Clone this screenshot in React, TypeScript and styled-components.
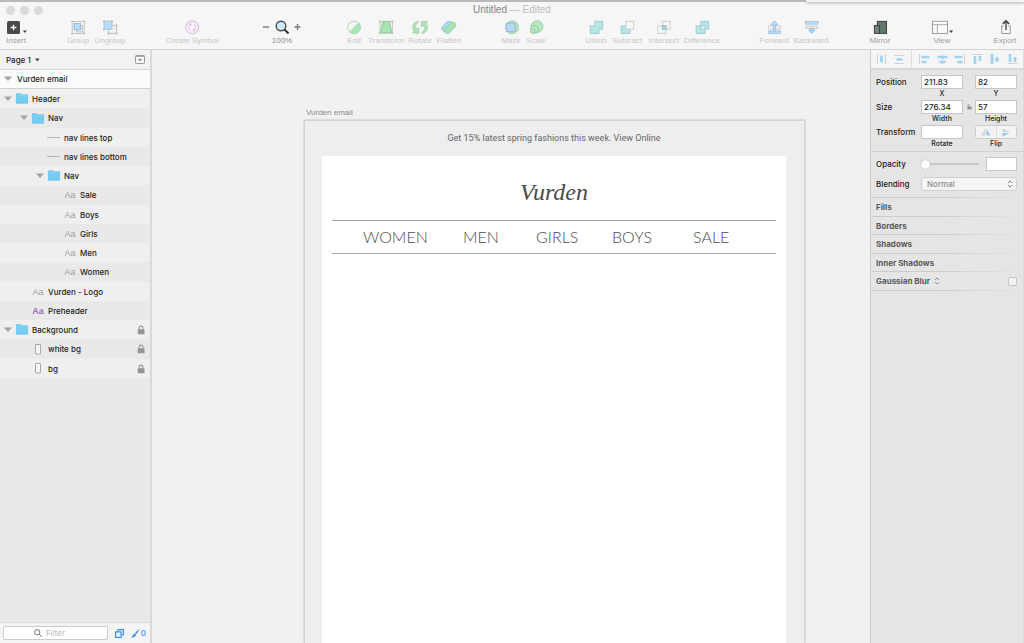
import React from "react";
import styled, { createGlobalStyle, css } from "styled-components";

const GlobalStyle = createGlobalStyle`
  *, *::before, *::after { box-sizing: border-box; }
  html, body, #root { height: 100%; }
  body {
    margin: 0;
    overflow: hidden;
    background: #f1f1f1;
    font-family: "Liberation Sans", Arial, sans-serif;
    color: #1c1c1c;
  }
  button, input, select { font: inherit; color: inherit; margin: 0; padding: 0; }
  button { border: 0; background: none; }
  ul { list-style: none; margin: 0; padding: 0; }
  h1, h2, p { margin: 0; font-weight: 400; }
`;

/* ---------- window ---------- */

const Window = styled.div`
  position: relative;
  display: flex;
  flex-direction: column;
  height: 100vh;
`;

const Header = styled.header`
  border-top: 2px solid #bababa;
  border-bottom: 1px solid #d4d4d4;
  background: #f6f6f6;
`;

const BackgroundPanel = styled.div`
  position: absolute;
  top: 0;
  right: 0;
  width: 218px;
  height: 2px;
  background: #f4f4f4;
  box-shadow: 0 1px 3px rgba(0, 0, 0, 0.35);
  clip-path: inset(0 0 -4px -4px);
`;

const TitleBar = styled.div`
  display: grid;
  grid-template-columns: 1fr auto 1fr;
  align-items: center;
  height: 16px;
  padding: 0 6px;
`;

const Lights = styled.div`
  display: flex;
  gap: 5px;
`;

const Light = styled.button`
  width: 9px;
  height: 9px;
  border-radius: 50%;
  background: #dadada;
`;

const Title = styled.h1`
  font-size: 10px;
  line-height: 12px;
  color: #858585;
  span { color: #bebebe; }
`;

const Toolbar = styled.div`
  display: flex;
  height: 31px;
  padding: 1px 6px 0 4px;
`;

const Spacer = styled.div<{ $grow: number }>`
  flex: ${(p) => p.$grow} 1 0;
`;

const Tool = styled.button<{ $w: number; $on?: boolean }>`
  display: flex;
  flex-direction: column;
  align-items: center;
  gap: 1px;
  flex: none;
  width: ${(p) => p.$w}px;
  font-size: 8px;
  line-height: 10px;
  white-space: nowrap;
  color: ${(p) => (p.$on ? "#9e9e9e" : "#c8c8c8")};
`;

const ZoomGroup = styled.div`
  display: grid;
  grid-template-columns: 10px 16px 10px;
  justify-content: space-between;
  align-items: center;
  row-gap: 1px;
  width: 40px;
  height: 27px;
  font-size: 8px;
  line-height: 10px;
  color: #8e8e8e;
  text-align: center;
  output { grid-column: 1 / -1; }
  button { height: 16px; display: flex; align-items: center; justify-content: center; }
`;

const Icon = styled.svg<{ $w?: number; $h?: number }>`
  display: block;
  flex: none;
  width: ${(p) => p.$w ?? 16}px;
  height: ${(p) => p.$h ?? 16}px;
  overflow: visible;
`;

const Body = styled.div`
  display: flex;
  flex: 1;
  min-height: 0;
`;

/* ---------- layer list ---------- */

const uiText = css`
  font-family: Inter, "Liberation Sans", sans-serif;
  font-size: 8px;
  line-height: 10px;
  font-weight: 500;
`;

const Sidebar = styled.aside`
  ${uiText}
  display: flex;
  flex-direction: column;
  flex: none;
  width: 152px;
  background: #e9e9e9;
  border-right: 2px solid #d9d9d9;
`;

const PageBar = styled.div`
  display: flex;
  align-items: center;
  justify-content: space-between;
  height: 20px;
  padding: 0 5px 0 6px;
  border-bottom: 1px solid #d6d6d6;
  background: #f2f2f2;
`;

const PageButton = styled.button`
  display: flex;
  align-items: center;
  gap: 4px;
`;

const ArtboardRow = styled.button`
  display: flex;
  align-items: center;
  gap: 5px;
  height: 19px;
  padding-left: 4px;
  border-bottom: 1px solid #d2d2d2;
  background: #fbfbfb;
`;

const LayerList = styled.ul`
  flex: 1;
`;

const LayerRow = styled.li<{ $level: number }>`
  display: flex;
  align-items: center;
  gap: 4px;
  height: 19px;
  padding: 0 5px 0 ${(p) => 4 + p.$level * 16}px;
  background: #e9e9e9;
  &:nth-child(odd) { background: #efefef; }
  &:nth-child(4n + 2) { height: 20px; }
`;

const Arrow = styled.span`
  flex: none;
  width: 8px;
`;

const Glyph = styled.span`
  display: flex;
  justify-content: center;
  flex: none;
  width: 12px;
`;

const TypeMark = styled.span<{ $accent?: boolean }>`
  font-family: "Liberation Sans", Arial, sans-serif;
  font-size: 9px;
  font-weight: ${(p) => (p.$accent ? 700 : 400)};
  color: ${(p) => (p.$accent ? "#a070b6" : "#a0a0a0")};
`;

const LayerName = styled.span`
  flex: 1;
  white-space: nowrap;
`;

const FilterBar = styled.div`
  display: flex;
  align-items: center;
  height: 21px;
  padding: 0 4px 0 3px;
  border-top: 1px solid #dcdcdc;
  background: #f4f4f4;
  color: #3d8ff0;
`;

const FilterField = styled.label`
  display: flex;
  align-items: center;
  gap: 4px;
  flex: 1;
  height: 14px;
  margin-right: 7px;
  padding-left: 30px;
  border: 1px solid #cdcdcd;
  border-radius: 2px;
  background: #fff;
  input {
    width: 50px;
    border: 0;
    outline: 0;
    background: none;
    color: #333;
    font-weight: 400;
  }
  input::placeholder { color: #b8b8b8; opacity: 1; }
`;

const FooterButton = styled.button`
  display: flex;
  align-items: center;
  gap: 1px;
  & + & { margin-left: 7px; }
`;

/* ---------- canvas ---------- */

const Canvas = styled.main`
  display: flex;
  flex-direction: column;
  align-items: flex-start;
  flex: 1;
  min-width: 0;
  overflow: hidden;
  padding: 57px 0 0 152px;
  background: #f1f1f1;
`;

const ArtboardName = styled.p`
  padding: 0 2px 1px;
  font-size: 8px;
  line-height: 12px;
  color: #8a8a8a;
`;

const Artboard = styled.section`
  display: flex;
  flex-direction: column;
  flex: 1;
  width: 501px;
  padding: 0 18px 0 17px;
  border: 1px solid #d2d2d2;
  border-bottom: 0;
  background: #eeeeee;
  box-shadow: 0 0 2px rgba(0, 0, 0, 0.25);
`;

const Preheader = styled.p`
  height: 35px;
  font-family: Roboto, "Liberation Sans", sans-serif;
  font-size: 9px;
  line-height: 35px;
  text-align: center;
  color: #666;
  a { color: inherit; text-decoration: none; }
`;

const Sheet = styled.div`
  flex: 1;
  padding: 0 10px;
  background: #fff;
`;

const Logo = styled.h2`
  height: 64px;
  padding-top: 16px;
  font-family: "Liberation Serif", "Times New Roman", serif;
  font-style: italic;
  font-size: 24px;
  line-height: 40px;
  text-align: center;
  color: #4a4a4a;
`;

const MailNav = styled.nav`
  display: grid;
  grid-template-columns: 100px 73px 76px 81px auto;
  height: 34px;
  padding-left: 31px;
  border-top: 1px solid #a6a6a6;
  border-bottom: 1px solid #a6a6a6;
  font-family: Lato, sans-serif;
  font-weight: 300;
  font-size: 16px;
  line-height: 32px;
  a { color: #4c4c4c; text-decoration: none; }
`;

/* ---------- inspector ---------- */

const Inspector = styled.aside`
  ${uiText}
  flex: none;
  width: 154px;
  background: #e5e5e5;
  border-left: 1px solid #cbcbcb;
  border-right: 1px solid #dadada;
`;

const AlignBar = styled.div`
  display: flex;
  align-items: center;
  justify-content: space-between;
  height: 20px;
  padding: 0 5px;
  border-bottom: 2px solid #d8d8d8;
  background: #f5f5f5;
  hr { width: 1px; height: 18px; margin: 0; border: 0; background: #dcdcdc; }
`;

const Geometry = styled.div`
  padding: 5px 6px 1px 5px;
  border-bottom: 1px solid #d0d0d0;
`;

const GeometryRow = styled.div`
  display: grid;
  grid-template-columns: 45px 42px 12px 42px;
  height: 25px;
  line-height: 14px;
`;

const FieldBox = styled.label`
  display: flex;
  flex-direction: column;
  align-items: center;
  gap: 1px;
  font-size: 7px;
  line-height: 8px;
`;

const TextField = styled.input`
  width: 100%;
  height: 14px;
  padding: 0 2px;
  border: 1px solid #c6c6c6;
  border-radius: 0;
  background: #fff;
  font-size: 8px;
`;

const LockButton = styled.button`
  display: flex;
  align-items: center;
  justify-content: center;
  height: 14px;
`;

const FlipBox = styled.div`
  font-size: 7px;
  line-height: 10px;
  text-align: center;
`;

const FlipButtons = styled.div`
  display: flex;
  height: 14px;
  border: 1px solid #cccccc;
  border-radius: 3px;
  background: #f3f3f3;
  button { flex: 1; display: flex; align-items: center; justify-content: center; }
  button + button { border-left: 1px solid #e0e0e0; }
`;

const Blend = styled.div`
  padding: 5px 6px 6px 5px;
`;

const BlendRow = styled.div`
  display: flex;
  align-items: center;
  height: 14px;
  & + & { margin-top: 6px; }
  label { flex: none; width: 45px; }
`;

const Slider = styled.input`
  appearance: none;
  width: 58px;
  height: 10px;
  margin-right: 7px;
  background: linear-gradient(#c9c9c9, #c9c9c9) center / 100% 2px no-repeat;
  &::-webkit-slider-thumb {
    appearance: none;
    width: 9px;
    height: 9px;
    border-radius: 50%;
    background: #fcfcfc;
    box-shadow: 0 0 1px rgba(0, 0, 0, 0.4);
  }
`;

const OpacityField = styled(TextField)`
  width: 31px;
`;

const SelectBox = styled.div`
  display: flex;
  align-items: center;
  flex: 1;
  height: 14px;
  padding-right: 3px;
  border: 1px solid #cfcfcf;
  border-radius: 3px;
  background: #f4f4f4;
  select {
    appearance: none;
    flex: 1;
    padding-left: 5px;
    border: 0;
    background: none;
    color: #8c8c8c;
    line-height: 12px;
  }
`;

const Section = styled.section`
  display: flex;
  align-items: center;
  gap: 4px;
  height: 19px;
  padding: 0 6px 0 5px;
  border-top: 1px solid;
  border-image: linear-gradient(to right, #cbcbcb 40%, #e5e5e5) 1;
  &:nth-of-type(even) { height: 18px; }
  &:last-of-type { height: 20px; border-bottom: 1px solid; }
  button { font-weight: 700; color: #5a5a5a; }
  input {
    appearance: none;
    width: 9px;
    height: 9px;
    margin-left: auto;
    border: 1px solid #c4c4c4;
    border-radius: 2px;
    background: #f4f4f4;
  }
`;

/* ---------- drawings ---------- */

const DownArrow = () => (
  <Icon $w={8} $h={6} viewBox="0 0 8 6"><path d="M0 .5h8L4 5z" fill="#a3a3a3" /></Icon>
);

const SmallCaret = () => (
  <Icon $w={5} $h={4} viewBox="0 0 5 4"><path d="M0 .5h4.6L2.3 3.4z" fill="#444" /></Icon>
);

const Stepper = () => (
  <Icon $w={6} $h={8} viewBox="0 0 6 8" fill="none" stroke="#8b8b8b">
    <path d="M1 3l2-2 2 2M1 5l2 2 2-2" />
  </Icon>
);

const Folder = () => (
  <Icon $w={12} $h={11} viewBox="0 0 12 11">
    <path d="M.4 .8h4.2l1 1h6v8.4H.4z" fill="#74cdf4" stroke="#62bbe4" strokeWidth=".7" />
    <path d="M.8 2.8h10.4" stroke="#9adcf8" strokeWidth=".6" />
  </Icon>
);

const Lock = () => (
  <Icon $w={8} $h={10} viewBox="0 0 8 10">
    <rect x=".7" y="4.3" width="6.8" height="5" rx=".5" fill="#949494" />
    <path d="M2.2 4.5V3a1.9 1.9 0 0 1 3.8 0v1.5" fill="none" stroke="#949494" strokeWidth="1.1" />
  </Icon>
);

const gray = "#c3c3c3";
const teal = "#b4e6e6";
const tealEdge = "#a0cccc";

const drawings: Record<string, React.ReactNode> = {
  insert: (
    <>
      <rect x="-1" y="2" width="13" height="13" rx="1.6" fill="#4b4b4b" />
      <path d="M5.5 5.7v5.6M2.7 8.5h5.6" stroke="#fff" strokeWidth="1.3" />
      <path d="M14.800 11.400h4.200l-2.100 2.600z" fill="#444" />
    </>
  ),
  group: (
    <>
      <rect x="2.2" y="2.5" width="12" height="12" fill="none" stroke={gray} />
      <rect x="6.5" y="6.5" width="6" height="6.4" fill="#f1f1f1" stroke={gray} />
      <rect x="4.2" y="4.6" width="6.4" height="6.2" fill="#b9dff8" stroke="#8fbbe0" />
      <path d="M1.3 1.6h2v2h-2zM13.2 1.6h2v2h-2zM1.3 13.4h2v2h-2zM13.2 13.4h2v2h-2z" fill={gray} />
    </>
  ),
  ungroup: (
    <>
      <rect x="6.4" y="6.4" width="8" height="8" fill="#f4f4f4" stroke={gray} />
      <rect x="2" y="2.2" width="8" height="8" fill="#b9dff8" stroke="#9cc5e6" />
      <path d="M1 1.3h2v2H1zM9 1.3h2v2H9zM1 9.2h2v2H1zM13.4 5.4h2v2h-2zM13.4 13.4h2v2h-2zM5.4 13.4h2v2h-2z" fill={gray} />
    </>
  ),
  symbol: (
    <g fill="none" stroke="#dfc0e8" strokeWidth="1.1">
      <circle cx="8.2" cy="8.3" r="6.4" />
      <path d="M6.6 11.6C3.9 10.3 3.9 6.4 6.6 5.1M5 4.9h2v2M9.8 5c2.7 1.3 2.7 5.2 0 6.5M11.4 11.7h-2v-2" />
    </g>
  ),
  edit: (
    <>
      <circle cx="8" cy="8.3" r="6.2" fill="#f3f6f3" stroke="#bfcfc2" />
      <path d="M12.6 3.9A6.3 6.3 0 0 1 3.7 12.9z" fill="#a9e5b2" stroke="#9ed3a7" strokeWidth=".7" />
    </>
  ),
  transform: (
    <>
      <rect x="1.9" y="2.3" width="12.6" height="11.8" fill="#e6f3e8" stroke="#c0cfc2" />
      <path d="M5 2.8h6.4l2.5 11H2.5z" fill="#a9e5b2" stroke="#93c79b" />
      <path d="M1 1.4h2v2H1zM13.3 1.4h2v2h-2zM1 13h2v2H1zM13.3 13h2v2h-2z" fill="#b4ccb7" />
    </>
  ),
  rotate: (
    <g fill="#a9e5b2" stroke="#a3cfa9" strokeWidth=".8">
      <path d="M6.200 2.200C1 2.600-1 8.400 2.100 12L.6 13.900l6.200.5V8.700L4.600 10.200C3 7.600 3.600 4.600 6.200 3.400z" />
      <path d="M10 14.400c5.200-.4 7.200-6.200 4.100-9.800L15.600 2.700 9.400 2.200v5.700L11.600 6.400c1.600 2.600 1 5.600-1.600 6.800z" />
    </g>
  ),
  flatten: (
    <g strokeWidth="1">
      <g transform="rotate(-45 8 8.3)">
        <rect x="1.500" y="3.300" width="11.500" height="6" rx="3" fill="#ade0ee" stroke="#93c3d6" />
        <rect x="1.500" y="6.800" width="13.500" height="5.400" rx="2.700" fill="#a9e5b2" stroke="#94cfae" />
      </g>
    </g>
  ),
  mask: (
    <>
      <circle cx="9" cy="8.3" r="6.4" fill="#b0e2b9" stroke="#9fcfae" />
      <rect x="3.4" y="4.2" width="8.600" height="8.200" fill="#b3d9f5" stroke="#a3b6dc" />
    </>
  ),
  scale: (
    <g fill="#b8e6c0" stroke="#94cc9e" strokeWidth=".9">
      <circle cx="9" cy="7.6" r="5.9" />
      <circle cx="6.5" cy="10.3" r="4" />
      <circle cx="4.7" cy="12.2" r="2.3" />
    </g>
  ),
  union: <path d="M6.900 2.300h7.800v7.800h-3.700v4.300H2.200V6.900h4.700z" fill={teal} stroke={tealEdge} />,
  subtract: (
    <>
      <path d="M2.200 6.900h4.700v3.200h4.100v4.300H2.200z" fill={teal} stroke={tealEdge} />
      <rect x="6.900" y="2.300" width="7.800" height="7.800" fill="#f6f6f6" stroke="#cfcfcf" />
    </>
  ),
  intersect: (
    <>
      <rect x="1.700" y="6.900" width="8.200" height="7.500" fill="none" stroke="#cfcfcf" />
      <rect x="6.400" y="2.300" width="7.800" height="7.800" fill="none" stroke="#cfcfcf" />
      <rect x="6.400" y="6.900" width="3.500" height="3.200" fill={teal} stroke="#82bcbc" />
    </>
  ),
  difference: (
    <>
      <path d="M6.900 2.300h7.800v7.800h-3.700v4.300H2.200V6.900h4.700z" fill={teal} stroke={tealEdge} />
      <rect x="6.900" y="6.900" width="4.100" height="3.200" fill="#f4f7f7" stroke={tealEdge} />
    </>
  ),
  forward: (
    <>
      <path d="M2.500 6.800h12v3h-12z" fill="#f6f6f6" stroke="#cdcdcd" strokeWidth=".9" />
      <path d="M2.500 11.800h12v2.700h-12z" fill="#b8dbf8" stroke="#9dbfe4" strokeWidth=".8" />
      <path d="M7.400 12V5.700H5.200L8.500 1.900l3.300 3.800H9.600V12z" fill="#b8dbf8" stroke="#93b8e2" strokeWidth=".8" />
    </>
  ),
  backward: (
    <>
      <path d="M2.300 2.400h12.800v2.700H2.300z" fill="#b8e0f8" stroke="#9dbfe4" strokeWidth=".8" />
      <path d="M2.800 7h11.800v2.400H2.800z" fill="#f6f6f6" stroke="#c4c4c4" strokeWidth=".9" />
      <path d="M7.200 9h3v2h2L8.700 14.700 5.300 11h1.900z" fill="#a9cdf3" stroke="#93b8e2" strokeWidth=".6" />
    </>
  ),
  mirror: (
    <>
      <rect x="5.300" y="2.400" width="9.200" height="12" fill="#5f7a6c" stroke="#3b3f3d" />
      <rect x="2.400" y="6.600" width="5" height="7.800" fill="#71887b" stroke="#3b3f3d" />
    </>
  ),
  view: (
    <>
      <rect x="-1.500" y="2.300" width="15" height="12.200" fill="#fafafa" stroke="#a0a0a0" />
      <path d="M-1 5.700h14M3.400 5.700v8.400" stroke="#ababab" />
      <path d="M15 11.400h4.200L17.100 14z" fill="#444" />
    </>
  ),
  share: (
    <>
      <path d="M6.700 7H4.700v7.500h8.600V7h-2" fill="none" stroke="#999" />
      <path d="M9 11V2.500" stroke="#3f3f3f" strokeWidth="1.300" />
      <path d="M5.900 4.900L9 1.900l3.100 3" fill="none" stroke="#3f3f3f" strokeWidth="1.600" />
    </>
  ),
};

interface ToolSpec { icon: string; label: string; w: number; on?: boolean }

const toolGroups: { gap: number; tools: ToolSpec[] }[] = [
  { gap: 0, tools: [{ icon: "insert", label: "Insert", w: 24, on: true }] },
  { gap: 34, tools: [{ icon: "group", label: "Group", w: 32 }, { icon: "ungroup", label: "Ungroup", w: 32 }] },
  { gap: 40, tools: [{ icon: "symbol", label: "Create Symbol", w: 52 }] },
  { gap: 44, tools: [] },
  {
    gap: 40,
    tools: [
      { icon: "edit", label: "Edit", w: 24 },
      { icon: "transform", label: "Transform", w: 40 },
      { icon: "rotate", label: "Rotate", w: 28 },
      { icon: "flatten", label: "Flatten", w: 30 },
    ],
  },
  { gap: 34, tools: [{ icon: "mask", label: "Mask", w: 26 }, { icon: "scale", label: "Scale", w: 24 }] },
  {
    gap: 34,
    tools: [
      { icon: "union", label: "Union", w: 28 },
      { icon: "subtract", label: "Subtract", w: 34 },
      { icon: "intersect", label: "Intersect", w: 40 },
      { icon: "difference", label: "Difference", w: 36 },
    ],
  },
  { gap: 36, tools: [{ icon: "forward", label: "Forward", w: 36 }, { icon: "backward", label: "Backward", w: 38 }] },
  { gap: 38, tools: [{ icon: "mirror", label: "Mirror", w: 24, on: true }] },
  { gap: 38, tools: [{ icon: "view", label: "View", w: 24, on: true }] },
  { gap: 38, tools: [{ icon: "share", label: "Export", w: 26, on: true }] },
];

const ZoomControl = () => (
  <ZoomGroup>
    <button aria-label="Zoom out">
      <Icon $w={8} $h={8} viewBox="0 0 8 8"><path d="M0 4h6" stroke="#7a7a7a" strokeWidth="1.400" /></Icon>
    </button>
    <button aria-label="Actual size">
      <Icon viewBox="0 0 16 16">
        <circle cx="7" cy="7" r="4.800" fill="#cdeafa" stroke="#4d4d4d" strokeWidth="1.400" />
        <path d="M10.500 10.500l4 4" stroke="#333" strokeWidth="2" />
      </Icon>
    </button>
    <button aria-label="Zoom in">
      <Icon $w={8} $h={8} viewBox="0 0 8 8"><path d="M1.500 4h6M4.500 1v6" stroke="#7a7a7a" strokeWidth="1.400" /></Icon>
    </button>
    <output>100%</output>
  </ZoomGroup>
);

type Kind = "folder" | "line" | "text" | "accent" | "rect";

const layers: { name: string; level: number; kind: Kind; locked?: boolean }[] = [
  { name: "Header", level: 0, kind: "folder" },
  { name: "Nav", level: 1, kind: "folder" },
  { name: "nav lines top", level: 2, kind: "line" },
  { name: "nav lines bottom", level: 2, kind: "line" },
  { name: "Nav", level: 2, kind: "folder" },
  { name: "Sale", level: 3, kind: "text" },
  { name: "Boys", level: 3, kind: "text" },
  { name: "Girls", level: 3, kind: "text" },
  { name: "Men", level: 3, kind: "text" },
  { name: "Women", level: 3, kind: "text" },
  { name: "Vurden - Logo", level: 1, kind: "text" },
  { name: "Preheader", level: 1, kind: "accent" },
  { name: "Background", level: 0, kind: "folder", locked: true },
  { name: "white bg", level: 1, kind: "rect", locked: true },
  { name: "bg", level: 1, kind: "rect", locked: true },
];

const LayerGlyph = ({ kind }: { kind: Kind }) => {
  switch (kind) {
    case "folder":
      return <Folder />;
    case "line":
      return <Icon $w={12} $h={2} viewBox="0 0 12 2"><path d="M-1 .5h13" stroke="#b5b5b5" /></Icon>;
    case "rect":
      return (
        <Icon $w={6} $h={11} viewBox="0 0 6 11">
          <rect x=".5" y=".5" width="5" height="9.500" rx=".5" fill="#f5f5f5" stroke="#a9a9a9" />
        </Icon>
      );
    default:
      return <TypeMark $accent={kind === "accent"}>Aa</TypeMark>;
  }
};

const alignDrawings: { label: string; bars: string; guides: string }[] = [
  { label: "Distribute horizontally", guides: "M1.500 1v10M9.500 1v10", bars: "M5.500 2.500v7" },
  { label: "Distribute vertically", guides: "M.5 2.500h10M.5 10.500h10", bars: "M2.500 6.500h6" },
  { label: "Align left", guides: "M.5 1v10", bars: "M2.500 4h8M2.500 9h5" },
  { label: "Align center", guides: "M5.500 1v10", bars: "M.5 4h10M2.500 9h6" },
  { label: "Align right", guides: "M10.500 1v10", bars: "M.5 4h8M3.500 9h5" },
  { label: "Align top", guides: "M.5 1.500h10", bars: "M3 3v8M8 3v5" },
  { label: "Align middle", guides: "M.5 6.500h10", bars: "M3 1v10M8 4v5" },
  { label: "Align bottom", guides: "M.5 10.500h10", bars: "M3 1v8M8 4v5" },
];

const sections = ["Fills", "Borders", "Shadows", "Inner Shadows"];

export default function App() {
  return (
    <>
      <GlobalStyle />
      <Window>
        <Header>
          <TitleBar>
            <Lights>
              <Light aria-label="Close" />
              <Light aria-label="Minimize" />
              <Light aria-label="Full screen" />
            </Lights>
            <Title>Untitled <span>— Edited</span></Title>
          </TitleBar>
          <Toolbar>
            {toolGroups.map((g, i) => (
              <React.Fragment key={i}>
                {g.gap > 0 && <Spacer $grow={g.gap} />}
                {g.tools.length === 0 && <ZoomControl />}
                {g.tools.map((t) => (
                  <Tool key={t.label} $w={t.w} $on={t.on}>
                    <Icon viewBox="0 0 16 16">{drawings[t.icon]}</Icon>
                    {t.label}
                  </Tool>
                ))}
              </React.Fragment>
            ))}
          </Toolbar>
        </Header>
        <BackgroundPanel />

        <Body>
          <Sidebar>
            <PageBar>
              <PageButton>Page 1 <SmallCaret /></PageButton>
              <button aria-label="Show pages">
                <Icon $w={10} $h={9} viewBox="0 0 10 9">
                  <rect x=".5" y=".5" width="9" height="8" rx=".8" fill="#f6f6f6" stroke="#9b9b9b" />
                  <path d="M1 1.300h8" stroke="#9b9b9b" />
                  <path d="M3 4h4L5 6.500z" fill="#8d8d8d" />
                </Icon>
              </button>
            </PageBar>
            <ArtboardRow><DownArrow />Vurden email</ArtboardRow>
            <LayerList>
              {layers.map((l, i) => (
                <LayerRow key={i} $level={l.level}>
                  <Arrow>{l.kind === "folder" && <DownArrow />}</Arrow>
                  <Glyph><LayerGlyph kind={l.kind} /></Glyph>
                  <LayerName>{l.name}</LayerName>
                  {l.locked && <Lock />}
                </LayerRow>
              ))}
            </LayerList>
            <FilterBar>
              <FilterField>
                <Icon $w={8} $h={8} viewBox="0 0 8 8" fill="none" stroke="#777">
                  <circle cx="3.200" cy="3.200" r="2.700" /><path d="M5.200 5.200L8 8" />
                </Icon>
                <input type="text" placeholder="Filter" aria-label="Filter" />
              </FilterField>
              <FooterButton aria-label="Show slices">
                <Icon $w={9} $h={9} viewBox="0 0 9 9" fill="none" stroke="#3d8ff0" strokeWidth="1.200">
                  <path d="M3 2.500V.6h5.400V6H6.500" /><rect x=".6" y="2.900" width="5.500" height="5.500" />
                </Icon>
              </FooterButton>
              <FooterButton>
                <Icon $w={9} $h={9} viewBox="0 0 9 9">
                  <path d="M8.800 0L4.300 3.500 5.800 5zM3.800 4L1.900 6.300.2 9l3.600-1.300 1.500-2.200z" fill="#3d8ff0" />
                </Icon>
                0
              </FooterButton>
            </FilterBar>
          </Sidebar>

          <Canvas>
            <ArtboardName>Vurden email</ArtboardName>
            <Artboard>
              <Preheader>
                Get 15% latest spring fashions this week. <a href="#online">View Online</a>
              </Preheader>
              <Sheet>
                <Logo>Vurden</Logo>
                <MailNav>
                  <a href="#women">WOMEN</a>
                  <a href="#men">MEN</a>
                  <a href="#girls">GIRLS</a>
                  <a href="#boys">BOYS</a>
                  <a href="#sale">SALE</a>
                </MailNav>
              </Sheet>
            </Artboard>
          </Canvas>

          <Inspector>
            <AlignBar>
              {alignDrawings.map((a, i) => (
                <React.Fragment key={a.label}>
                  {i === 2 && <hr />}
                  <button aria-label={a.label}>
                    <Icon $w={11} $h={12} viewBox="0 0 11 12" fill="none">
                      <path d={a.guides} stroke="#d0d3d6" />
                      <path d={a.bars} stroke="#9fd3f6" strokeWidth="2.600" />
                    </Icon>
                  </button>
                </React.Fragment>
              ))}
            </AlignBar>
            <Geometry>
              <GeometryRow>
                <span>Position</span>
                <FieldBox><TextField type="text" defaultValue="211.83" />X</FieldBox>
                <span />
                <FieldBox><TextField type="text" defaultValue="82" />Y</FieldBox>
              </GeometryRow>
              <GeometryRow>
                <span>Size</span>
                <FieldBox><TextField type="text" defaultValue="276.34" />Width</FieldBox>
                <LockButton aria-label="Lock proportions">
                  <Icon $w={5} $h={6} viewBox="0 0 5 6">
                    <rect x=".5" y="2.500" width="4" height="3" fill="#8d8d8d" />
                    <path d="M1 3V1.300c0-.8 2-.8 2 0" fill="none" stroke="#8d8d8d" strokeWidth=".8" />
                  </Icon>
                </LockButton>
                <FieldBox><TextField type="text" defaultValue="57" />Height</FieldBox>
              </GeometryRow>
              <GeometryRow>
                <span>Transform</span>
                <FieldBox><TextField type="text" defaultValue="" />Rotate</FieldBox>
                <span />
                <FlipBox>
                  <FlipButtons>
                    <button aria-label="Flip horizontally">
                      <Icon $w={10} $h={8} viewBox="0 0 10 8">
                        <path d="M4.300.5v7H.5z" fill="#cfd3d6" /><path d="M5.500.5v7h3.800z" fill="#93cdf3" />
                      </Icon>
                    </button>
                    <button aria-label="Flip vertically">
                      <Icon $w={8} $h={9} viewBox="0 0 8 9">
                        <path d="M.5 4h7L.5.3z" fill="#cfd3d6" /><path d="M.5 5h7L.5 8.700z" fill="#93cdf3" />
                      </Icon>
                    </button>
                  </FlipButtons>
                  Flip
                </FlipBox>
              </GeometryRow>
            </Geometry>
            <Blend>
              <BlendRow>
                <label htmlFor="opacity">Opacity</label>
                <Slider id="opacity" type="range" defaultValue={0} />
                <OpacityField type="text" aria-label="Opacity value" />
              </BlendRow>
              <BlendRow>
                <label htmlFor="blending">Blending</label>
                <SelectBox>
                  <select id="blending" defaultValue="Normal"><option>Normal</option></select>
                  <Stepper />
                </SelectBox>
              </BlendRow>
            </Blend>
            {sections.map((s) => (
              <Section key={s}><button>{s}</button></Section>
            ))}
            <Section>
              <button>Gaussian Blur</button>
              <Stepper />
              <input type="checkbox" aria-label="Gaussian Blur" />
            </Section>
          </Inspector>
        </Body>
      </Window>
    </>
  );
}
